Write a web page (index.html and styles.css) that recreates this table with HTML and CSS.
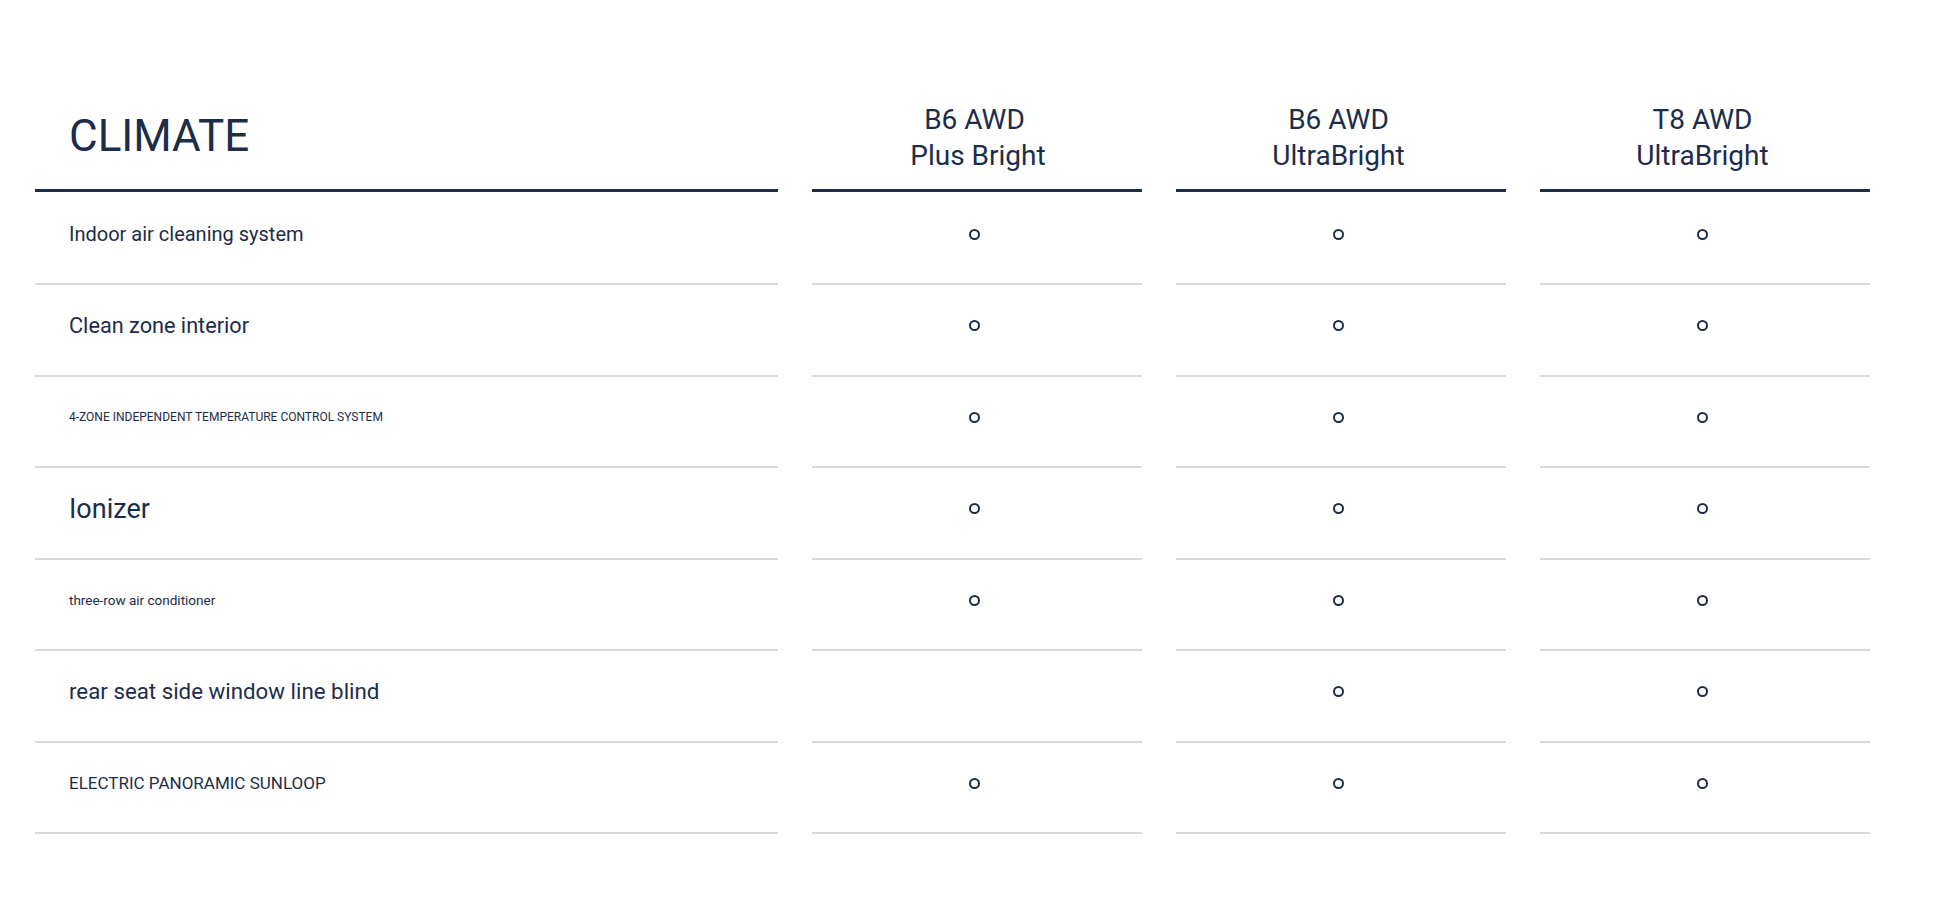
FILE: index.html
```html
<!DOCTYPE html>
<html lang="en">
<head>
<meta charset="utf-8">
<title>Climate</title>
<link rel="stylesheet" href="styles.css">
</head>
<body>
<div class="page">
  <div class="spec-table">
    <div class="head head-title"><h2 class="title">CLIMATE</h2></div>
    <div class="head head-model"><span>B6 AWD<br>&nbsp;Plus Bright</span></div>
    <div class="head head-model"><span>B6 AWD<br>UltraBright</span></div>
    <div class="head head-model"><span>T8 AWD<br>UltraBright</span></div>

    <div class="cell first label fs-20">Indoor air cleaning system</div>
    <div class="cell first val"><i class="dot"></i></div>
    <div class="cell first val"><i class="dot"></i></div>
    <div class="cell first val"><i class="dot"></i></div>

    <div class="cell label fs-22">Clean zone interior</div>
    <div class="cell val"><i class="dot"></i></div>
    <div class="cell val"><i class="dot"></i></div>
    <div class="cell val"><i class="dot"></i></div>

    <div class="cell label fs-12">4-ZONE INDEPENDENT TEMPERATURE CONTROL SYSTEM</div>
    <div class="cell val"><i class="dot"></i></div>
    <div class="cell val"><i class="dot"></i></div>
    <div class="cell val"><i class="dot"></i></div>

    <div class="cell label fs-27">Ionizer</div>
    <div class="cell val"><i class="dot"></i></div>
    <div class="cell val"><i class="dot"></i></div>
    <div class="cell val"><i class="dot"></i></div>

    <div class="cell label fs-13">three-row air conditioner</div>
    <div class="cell val"><i class="dot"></i></div>
    <div class="cell val"><i class="dot"></i></div>
    <div class="cell val"><i class="dot"></i></div>

    <div class="cell label fs-22b">rear seat side window line blind</div>
    <div class="cell val"></div>
    <div class="cell val"><i class="dot"></i></div>
    <div class="cell val"><i class="dot"></i></div>

    <div class="cell label fs-17">ELECTRIC PANORAMIC SUNLOOP</div>
    <div class="cell val"><i class="dot"></i></div>
    <div class="cell val"><i class="dot"></i></div>
    <div class="cell val"><i class="dot"></i></div>
  </div>
</div>
</body>
</html>
```
FILE: styles.css
```css
html, body {
  margin: 0;
  padding: 0;
  background: #ffffff;
}

body {
  font-family: Roboto, "Liberation Sans", sans-serif;
  color: #1c2d4a;
}

.page {
  padding-left: 35px;
}

.spec-table {
  display: grid;
  grid-template-columns: 743px 330px 330px 330px;
  column-gap: 34px;
  width: 1836px;
}

.head {
  box-sizing: border-box;
  height: 192px;
  border-bottom: 3px solid #1c2d4a;
  display: flex;
  align-items: flex-end;
}

.head-title {
  padding: 0 0 27px 34px;
}

.title {
  margin: 0;
  font-size: 44px;
  font-weight: 400;
  line-height: 52px;
}

.head-model {
  justify-content: center;
  padding: 0 5px 15px 0;
  font-size: 28px;
  line-height: 36px;
  text-align: center;
}

.cell {
  box-sizing: border-box;
  height: 91.5px;
  border-bottom: 2px solid #d9d9d9;
  display: flex;
  align-items: center;
  padding-bottom: 8px;
}

.cell.first {
  height: 93px;
  padding-top: 1px;
}

.label {
  padding-left: 34px;
  line-height: 1.2;
}

.val {
  justify-content: center;
  padding-right: 5px;
}

.dot {
  display: block;
  box-sizing: border-box;
  width: 11px;
  height: 11px;
  border: 2px solid #1c2d4a;
  border-radius: 50%;
}

.fs-12 { font-size: 12px; }
.fs-13 { font-size: 13.5px; }
.fs-17 { font-size: 17px; }
.fs-20 { font-size: 20px; }
.fs-22 { font-size: 21.7px; }
.fs-22b { font-size: 22.3px; }
.fs-27 { font-size: 27px; }
```
